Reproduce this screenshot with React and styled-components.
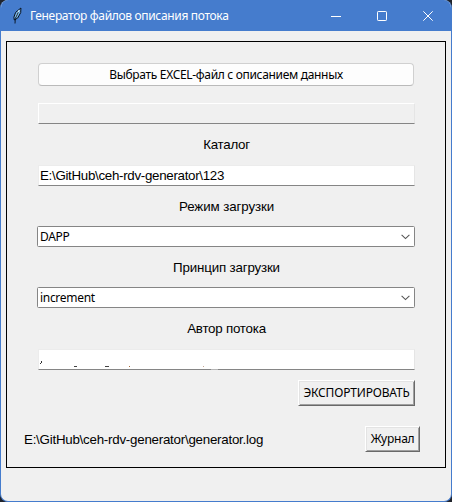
import React from "react";
import styled, { createGlobalStyle } from "styled-components";

const GlobalStyle = createGlobalStyle`
  * { box-sizing: border-box; }
  html, body { margin: 0; padding: 0; background: #20242c; }
  body { overflow: hidden; }
`;

const ui = '"Noto Sans", "Open Sans", sans-serif';
const arial = '"Liberation Sans", Arial, sans-serif';

const Window = styled.div`
  width: 452px;
  height: 502px;
  display: flex;
  flex-direction: column;
  background: #f0f0f0;
  border: 1px solid #457ccd;
  border-top: 0;
  border-radius: 8px;
  overflow: hidden;
  color: #000;
`;

const TitleBar = styled.header`
  flex: 0 0 31px;
  display: flex;
  align-items: center;
  padding-left: 9px;
  background: #457ccd;
  color: #fff;
`;

const Title = styled.span`
  flex: 1;
  margin-left: 6px;
  font: 12px/16px ${ui};
  letter-spacing: ${(p) => p.$spacing}px;
  white-space: nowrap;
`;

const Controls = styled.div`
  display: flex;
  height: 31px;
`;

const WindowButton = styled.button`
  width: 46px;
  height: 31px;
  padding: 0;
  border: 0;
  display: grid;
  place-items: center;
  background: transparent;
  color: #fff;
`;

const Frame = styled.main`
  flex: 0 0 427px;
  width: 440px;
  margin: 10px 0 0 5px;
  border: 1px solid #000;
  display: flex;
  flex-direction: column;
`;

const Form = styled.div`
  display: flex;
  flex-direction: column;
  padding: 21px 30px 0 31px;
`;

const FileButton = styled.button`
  height: 23px;
  width: 376px;
  padding: 0;
  border: 1px solid #d0d0d0;
  border-bottom-color: #bababa;
  border-radius: 4px;
  background: #fdfdfd;
  color: #000;
  font: 12px/19px ${ui};
  letter-spacing: ${(p) => p.$spacing}px;
  white-space: nowrap;
`;

const Entry = styled.div`
  height: 21px;
  width: 377px;
  padding-left: 1px;
  margin-top: ${(p) => p.$gap}px;
  border: 1px solid #e5e5e5;
  border-left-color: ${(p) => (p.$disabled ? "#fff" : "#ececec")};
  border-top-color: ${(p) => (p.$disabled ? "#fff" : "#ececec")};
  border-bottom-color: #858585;
  background: ${(p) => (p.$disabled ? "#f0f0f0" : "#fff")};
  font: 13.33px/19px ${arial};
  letter-spacing: ${(p) => p.$spacing || 0}px;
  white-space: nowrap;
`;

const Label = styled.div`
  height: 16px;
  margin-top: ${(p) => p.$gap}px;
  width: 377px;
  text-align: center;
  font: 13.33px/16px ${arial};
  letter-spacing: ${(p) => p.$spacing}px;
  white-space: nowrap;
`;

const Combo = styled.div`
  height: 21px;
  width: 378px;
  margin: ${(p) => p.$gap}px 0 0 -1px;
  padding: 0 4px 0 2px;
  display: flex;
  align-items: center;
  justify-content: space-between;
  border: 1px solid #858585;
  border-radius: 1.5px;
  background: #fff;
  font: 12px/19px ${ui};
  letter-spacing: ${(p) => p.$spacing}px;
`;

const Actions = styled.div`
  display: flex;
  justify-content: flex-end;
  margin: 10px 30px 0 0;
`;

const Footer = styled.footer`
  display: flex;
  align-items: center;
  justify-content: space-between;
  margin: 20px 25px 0 17px;
`;

const LogPath = styled.span`
  padding-top: 2px;
  font: 13.33px/16px ${arial};
  letter-spacing: ${(p) => p.$spacing}px;
`;

const RaisedButton = styled.button`
  width: ${(p) => p.$width}px;
  height: 26px;
  padding: 0;
  border: 1px solid;
  border-color: #fff #696969 #696969 #fff;
  box-shadow: inset 1px 1px #e3e3e3, inset -1px -1px #a0a0a0;
  background: #f0f0f0;
  color: #000;
  font: 12px/22px ${ui};
  letter-spacing: ${(p) => p.$spacing}px;
  white-space: nowrap;
`;

const Drawing = styled.svg`
  display: block;
  flex: none;
`;

const Feather = () => (
  <Drawing width="14" height="18" viewBox="0 0 14 18">
    <path d="M4.3 13 3.9 10.2 5.6 5.4 10.9 1 10.7 5.6 7.7 11Z" fill="#74b9ee" stroke="#07101b" strokeWidth="1" />
    <path d="M5.8 10 9.2 3" stroke="#dff2ff" strokeWidth="1" />
    <path d="M5 16.5 5.3 11.5 8.3 5.2" fill="none" stroke="#07101b" strokeWidth=".9" />
  </Drawing>
);

const Chevron = () => (
  <Drawing width="9" height="6" viewBox="0 0 9 6" fill="none">
    <path d="M.6 .8 4.5 4.6 8.4 .8" stroke="#555" strokeWidth="1.1" />
  </Drawing>
);

const TextRemains = () => (
  <Drawing width="184" height="20" viewBox="0 0 184 20" shapeRendering="crispEdges">
    <path d="M1 11h1v2H1zM0 13h1v1H0z" fill="#333" />
    <path d="M34 16h3v1h-3zM65 16h4v1h-4z" fill="#444" />
    <path d="M89 16h1v1h-1z" fill="#a86b3c" />
    <path d="M163 16h1v1h-1z" fill="#c6a895" />
    <path d="M171 19h7v1h-7z" fill="#b5b5b5" />
  </Drawing>
);

export default function App() {
  return (
    <>
      <GlobalStyle />
      <Window>
        <TitleBar>
          <Feather />
          <Title $spacing={-0.33}>Генератор файлов описания потока</Title>
          <Controls>
            <WindowButton aria-label="Свернуть">
              <Drawing width="10" height="10" viewBox="0 0 10 10"><path d="M0 5.5h10" stroke="currentColor" /></Drawing>
            </WindowButton>
            <WindowButton aria-label="Развернуть">
              <Drawing width="10" height="10" viewBox="0 0 10 10"><rect x=".5" y=".5" width="9" height="9" rx=".7" fill="none" stroke="currentColor" /></Drawing>
            </WindowButton>
            <WindowButton aria-label="Закрыть">
              <Drawing width="10" height="10" viewBox="0 0 10 10"><path d="m.3.3 9.4 9.4m0-9.4L.3 9.7" stroke="currentColor" /></Drawing>
            </WindowButton>
          </Controls>
        </TitleBar>
        <Frame>
          <Form>
            <FileButton $spacing={-0.32}>Выбрать EXCEL-файл с описанием данных</FileButton>
            <Entry $gap={17} $disabled />
            <Label $gap={13} $spacing={-0.25}>Каталог</Label>
            <Entry $gap={12} $spacing={-0.3}>E:\GitHub\ceh-rdv-generator\123</Entry>
            <Label $gap={13} $spacing={-0.1}>Режим загрузки</Label>
            <Combo $gap={11} $spacing={-0.3}>DAPP<Chevron /></Combo>
            <Label $gap={13} $spacing={-0.17}>Принцип загрузки</Label>
            <Combo $gap={11} $spacing={-0.3}>increment<Chevron /></Combo>
            <Label $gap={13} $spacing={-0.23}>Автор потока</Label>
            <Entry $gap={12}><TextRemains /></Entry>
          </Form>
          <Actions>
            <RaisedButton $width={117} $spacing={-0.17}>ЭКСПОРТИРОВАТЬ</RaisedButton>
          </Actions>
          <Footer>
            <LogPath $spacing={-0.24}>E:\GitHub\ceh-rdv-generator\generator.log</LogPath>
            <RaisedButton $width={55} $spacing={-0.25}>Журнал</RaisedButton>
          </Footer>
        </Frame>
      </Window>
    </>
  );
}
